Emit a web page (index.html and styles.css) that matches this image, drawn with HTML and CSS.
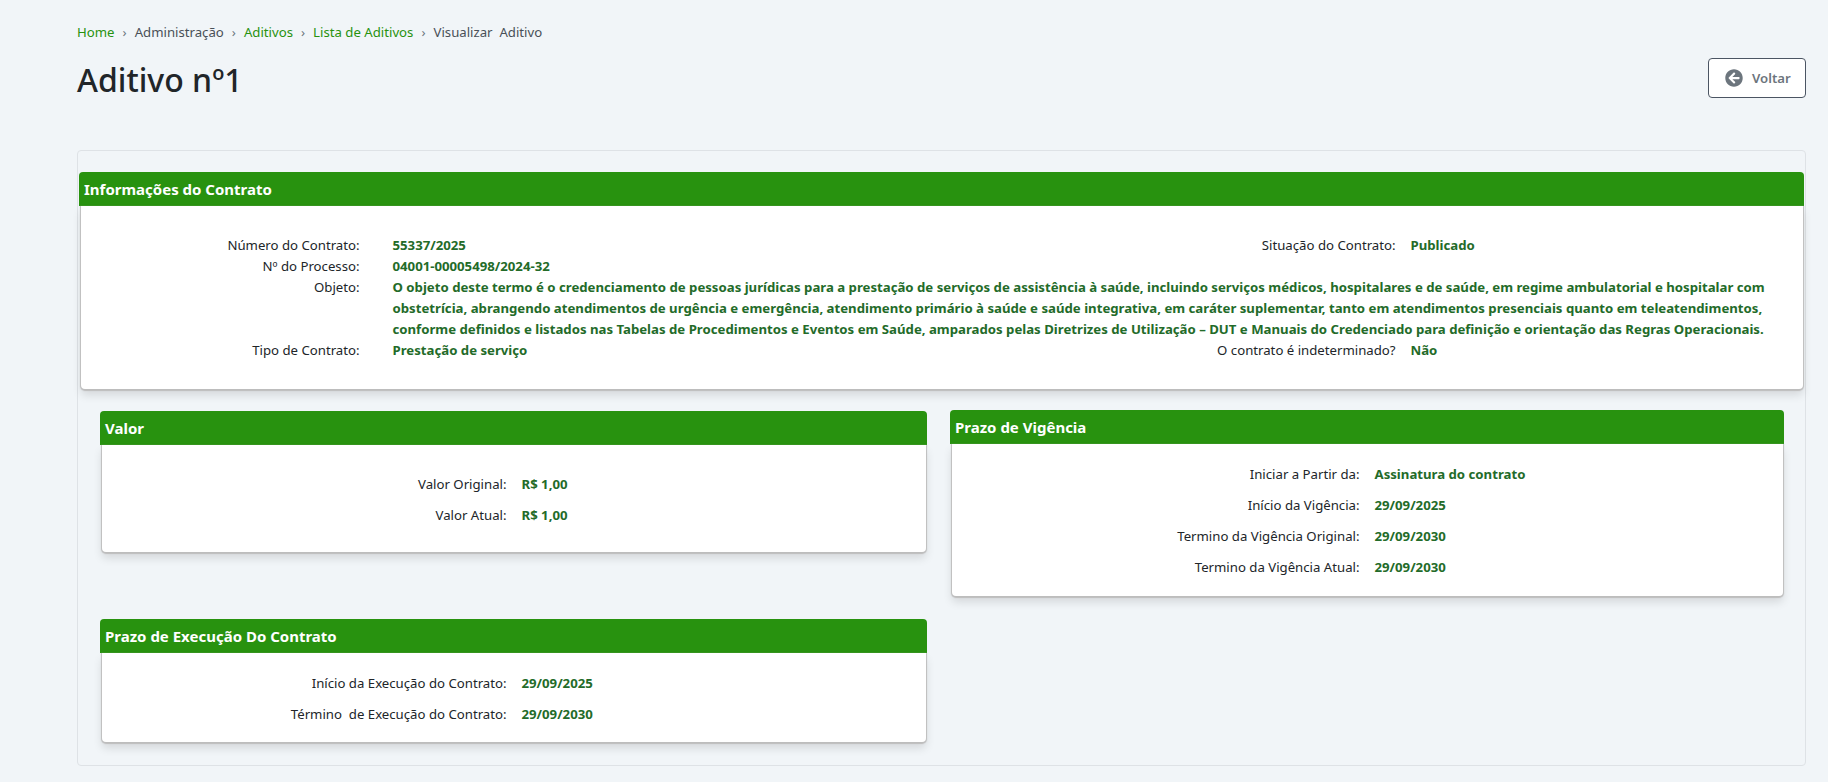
FILE: index.html
```html
<!DOCTYPE html>
<html lang="pt-BR">
<head>
    <meta charset="UTF-8">
    <title>Aditivo nº1</title>
    <link rel="stylesheet" href="styles.css">
</head>
<body>
    <div class="page">
        <nav class="breadcrumb">
            <a href="#">Home</a><span class="sep">›</span>
            <span>Administração</span><span class="sep">›</span>
            <a href="#">Aditivos</a><span class="sep">›</span>
            <a href="#">Lista de Aditivos</a><span class="sep">›</span>
            <span>Visualizar&nbsp; Aditivo</span>
        </nav>
        <div class="page-head">
            <h1>Aditivo nº1</h1>
            <a href="#" class="btn-back">
                <svg viewBox="0 0 512 512" width="18" height="18"><path fill="#6c757d" d="M256 504C119 504 8 393 8 256S119 8 256 8s248 111 248 248-111 248-248 248zm28.9-143.6L209.4 288H392c13.3 0 24-10.7 24-24v-16c0-13.3-10.7-24-24-24H209.4l75.5-72.4c9.7-9.3 9.9-24.8.4-34.3l-11-10.9c-9.4-9.4-24.6-9.4-33.9 0L107.7 239c-9.4 9.4-9.4 24.6 0 33.9l132.7 132.7c9.4 9.4 24.6 9.4 33.9 0l11-10.9c9.5-9.5 9.3-25-.4-34.3z"/></svg>
                Voltar
            </a>
        </div>

        <div class="outer-card">
            <section class="panel panel-main">
                <h2 class="panel-title">Informações do Contrato</h2>
                <div class="panel-body info-grid">
                    <span class="label">Número do Contrato:</span>
                    <span class="value">55337/2025</span>
                    <span class="label">Situação do Contrato:</span>
                    <span class="value value-side">Publicado</span>

                    <span class="label">Nº do Processo:</span>
                    <span class="value value-wide">04001-00005498/2024-32</span>

                    <span class="label">Objeto:</span>
                    <span class="value value-wide">O objeto deste termo é o credenciamento de pessoas jurídicas para a prestação de serviços de assistência à saúde, incluindo serviços médicos, hospitalares e de saúde, em regime ambulatorial e hospitalar com obstetrícia, abrangendo atendimentos de urgência e emergência, atendimento primário à saúde e saúde integrativa, em caráter suplementar, tanto em atendimentos presenciais quanto em teleatendimentos, conforme definidos e listados nas Tabelas de Procedimentos e Eventos em Saúde, amparados pelas Diretrizes de Utilização – DUT e Manuais do Credenciado para definição e orientação das Regras Operacionais.</span>

                    <span class="label">Tipo de Contrato:</span>
                    <span class="value">Prestação de serviço</span>
                    <span class="label">O contrato é indeterminado?</span>
                    <span class="value value-side">Não</span>
                </div>
            </section>

            <div class="panel-columns">
                <section class="panel panel-valor">
                    <h2 class="panel-title">Valor</h2>
                    <div class="panel-body pairs pairs-valor">
                        <span class="label">Valor Original:</span><span class="value">R$ 1,00</span>
                        <span class="label">Valor Atual:</span><span class="value">R$ 1,00</span>
                    </div>
                </section>

                <section class="panel panel-vigencia">
                    <h2 class="panel-title">Prazo de Vigência</h2>
                    <div class="panel-body pairs pairs-vigencia">
                        <span class="label">Iniciar a Partir da:</span><span class="value">Assinatura do contrato</span>
                        <span class="label">Início da Vigência:</span><span class="value">29/09/2025</span>
                        <span class="label">Termino da Vigência Original:</span><span class="value">29/09/2030</span>
                        <span class="label">Termino da Vigência Atual:</span><span class="value">29/09/2030</span>
                    </div>
                </section>

                <section class="panel panel-execucao">
                    <h2 class="panel-title">Prazo de Execução Do Contrato</h2>
                    <div class="panel-body pairs pairs-execucao">
                        <span class="label">Início da Execução do Contrato:</span><span class="value">29/09/2025</span>
                        <span class="label">Término&nbsp; de Execução do Contrato:</span><span class="value">29/09/2030</span>
                    </div>
                </section>
            </div>
        </div>
    </div>
</body>
</html>
```

FILE: styles.css
```css
html, body {margin: 0; padding: 0;}
body {background: #f1f5f8; color: #212529; font-family: "Noto Sans", Arial, sans-serif; font-size: 13.2px; line-height: 21px;}
.page {padding: 22px 22px 16px 77px;}

.breadcrumb {display: flex; align-items: center; height: 21px; color: #495057;}
.breadcrumb a {color: #28920f; text-decoration: none;}
.breadcrumb .sep {margin: 0 8px; color: #6c757d;}

.page-head {display: flex; justify-content: space-between; align-items: flex-start; height: 107px; padding-top: 15px; box-sizing: border-box;}
h1 {margin: 3px 0 0; font-size: 32px; line-height: 38px; font-weight: 500; color: #212529;}
.btn-back {display: flex; align-items: center; gap: 9px; width: 98px; height: 40px; box-sizing: border-box; padding-left: 16px; background: #fff; border: 1px solid #4b5563; border-radius: 4px; color: #6c757d; font-weight: 600; font-size: 13.2px; text-decoration: none;}

.outer-card {border: 1px solid #dee2e6; border-radius: 4px; padding: 21px 1px 23px 1px;}

.panel-title {margin: 0; height: 34px; padding-left: 5px; background: #28920f; color: #fff; font-size: 15px; line-height: 34px; font-weight: 700; border-radius: 4px 4px 0 0;}
.panel-body {margin: 0 1.5px; background: #fff; border-radius: 0 0 4px 4px; box-shadow: 0 1px 1px 1px #bdbdbd, 0 6px 10px rgba(0, 0, 0, .12);}

.label {text-align: right;}
.value {color: #236b29; font-weight: 700;}

.info-grid {display: grid; grid-template-columns: 279px 736px 300px 1fr; padding: 29px 0 28px;}
.info-grid .value {padding-left: 33px;}
.info-grid .value-side {padding-left: 15px;}
.info-grid .value-wide {grid-column: 2 / 5; padding-right: 30px;}

.panel-columns {display: grid; grid-template-columns: 827px 834px; column-gap: 23px; padding: 21px 0 0 21px;}
.panel-valor {margin-top: 1px;}
.panel-execucao {margin-top: 23px;}

.pairs {display: grid; row-gap: 10px;}
.pairs .value {padding-left: 15px;}
.pairs-valor {grid-template-columns: 405px 1fr; padding: 29px 0 26px;}
.pairs-vigencia {grid-template-columns: 408px 1fr; padding: 20px 0 18px;}
.pairs-execucao {grid-template-columns: 405px 1fr; padding: 20px 0 17px;}
```
